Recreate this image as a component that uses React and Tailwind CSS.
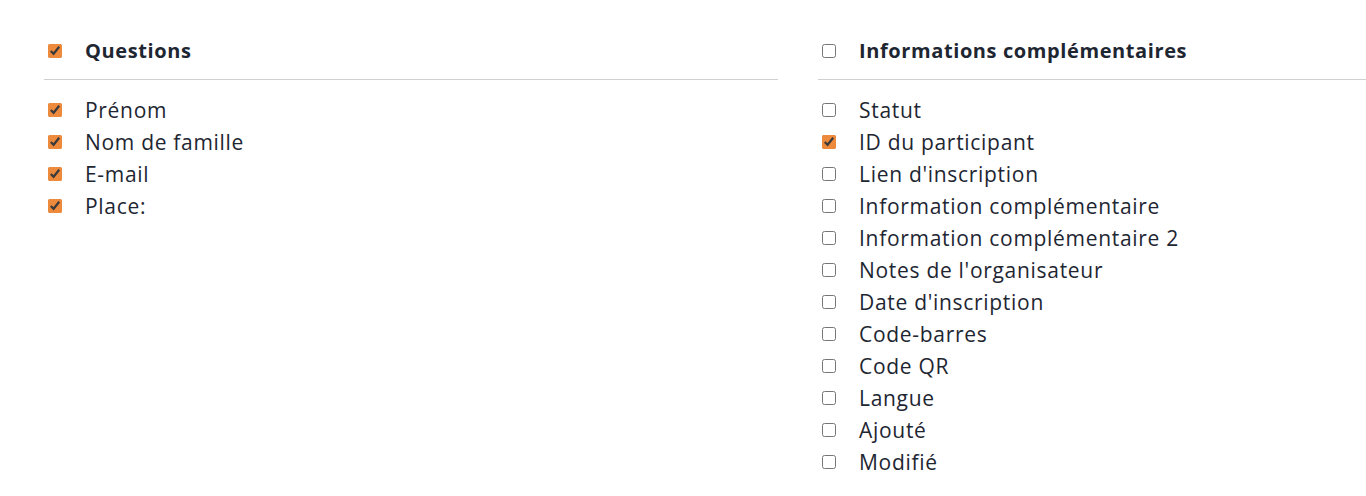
import React from "react";

const left = [
  ["Prénom", true],
  ["Nom de famille", true],
  ["E-mail", true],
  ["Place:", true],
];
const right = [
  ["Statut", false],
  ["ID du participant", true],
  ["Lien d'inscription", false],
  ["Information complémentaire", false],
  ["Information complémentaire 2", false],
  ["Notes de l'organisateur", false],
  ["Date d'inscription", false],
  ["Code-barres", false],
  ["Code QR", false],
  ["Langue", false],
  ["Ajouté", false],
  ["Modifié", false],
];

function Row({ label, checked, header }) {
  return (
    <label className={`flex items-center ${header ? "h-[40px]" : "h-[32px]"}`}>
      <input
        type="checkbox"
        defaultChecked={checked}
        className="m-0 ml-[4px] h-[14px] w-[14px] accent-[#ee8a3c]"
      />
      <span
        className={`ml-[23px] leading-[32px] text-[#1e2632] ${header ? "text-[20px] font-bold tracking-[0.6px]" : "text-[21px] tracking-[0.7px]"}`}
      >
        {label}
      </span>
    </label>
  );
}

function Column({ title, checked, items }) {
  return (
    <div className="w-[734px] shrink-0">
      <Row label={title} checked={checked} header />
      <div className="mt-[8px] border-t border-[#d0d0d0] pt-[14px]">
        {items.map(([l, c]) => (
          <Row key={l} label={l} checked={c} />
        ))}
      </div>
    </div>
  );
}

export default function App() {
  return (
    <div
      className="flex h-[496px] w-[1366px] gap-[40px] overflow-hidden bg-white pl-[44px] pt-[31px]"
      style={{ fontFamily: "'Open Sans', Lato, sans-serif" }}
    >
      <Column title="Questions" checked items={left} />
      <Column title="Informations complémentaires" checked={false} items={right} />
    </div>
  );
}
